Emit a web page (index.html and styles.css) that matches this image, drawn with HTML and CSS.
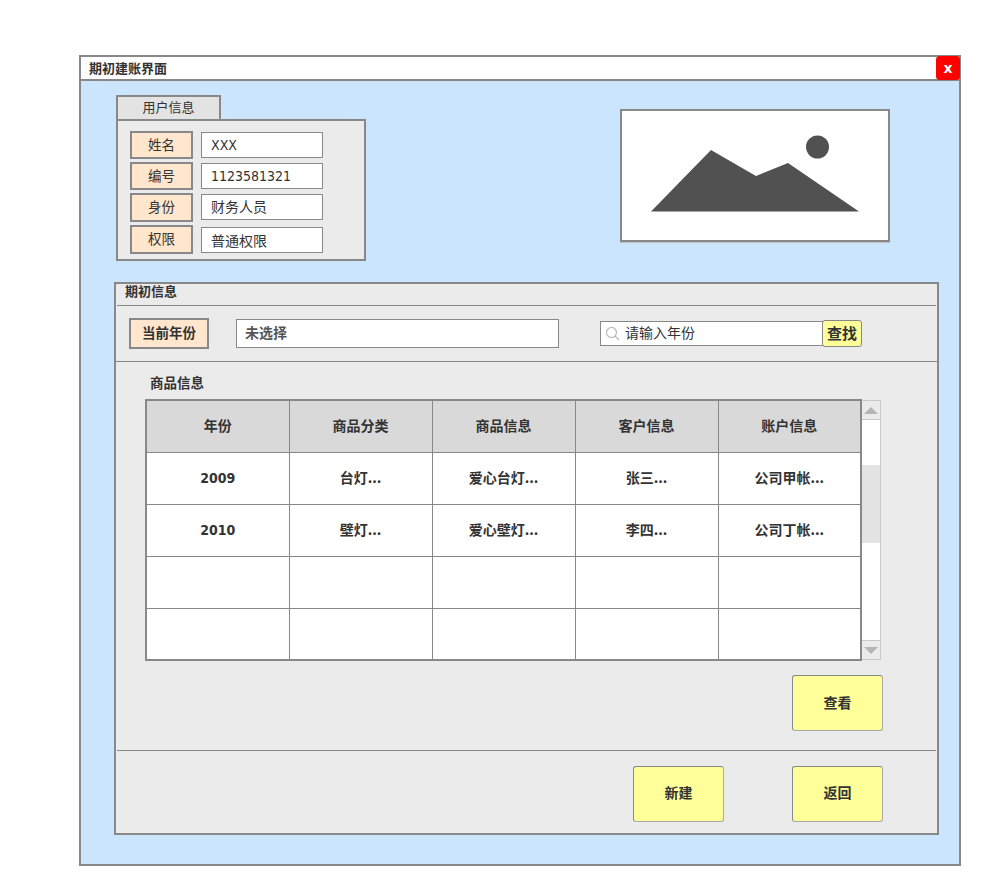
FILE: index.html
```html
<!DOCTYPE html>
<html lang="zh-CN">
<head>
    <meta charset="UTF-8">
    <title>期初建账界面</title>
    <link rel="stylesheet" href="styles.css">
</head>
<body>
    <div class="window">
        <div class="title-bar">期初建账界面</div>
        <div class="close-btn">x</div>

        <div class="window-body">
            <div class="top-row">
                <div class="user-box">
                    <div class="tab">用户信息</div>
                    <div class="user-group">
                        <div class="user-row">
                            <div class="tag">姓名</div>
                            <div class="field latin">XXX</div>
                        </div>
                        <div class="user-row">
                            <div class="tag">编号</div>
                            <div class="field latin">1123581321</div>
                        </div>
                        <div class="user-row tall">
                            <div class="tag">身份</div>
                            <div class="field">财务人员</div>
                        </div>
                        <div class="user-row tall">
                            <div class="tag">权限</div>
                            <div class="field low">普通权限</div>
                        </div>
                    </div>
                </div>
                <div class="picture">
                    <svg width="266" height="129" viewBox="0 0 266 129">
                        <path d="M29 100.500 L89 39 L134 65 L166 52 L237 100.500 Z" fill="#515151"/>
                        <circle cx="195.500" cy="36" r="11.500" fill="#515151"/>
                    </svg>
                </div>
            </div>

            <div class="panel">
                <div class="panel-title">期初信息</div>

                <div class="filter-row">
                    <div class="year-tag">当前年份</div>
                    <div class="year-select">未选择</div>
                    <div class="search">
                        <div class="search-input">
                            <svg width="14" height="14" viewBox="0 0 14 14">
                                <circle cx="5.500" cy="5.500" r="5" fill="none" stroke="#bbb" stroke-width="1.200"/>
                                <path d="M9 9 L13 13" stroke="#bbb" stroke-width="1.200"/>
                            </svg>
                            <span>请输入年份</span>
                        </div>
                        <div class="search-btn">查找</div>
                    </div>
                </div>

                <div class="goods">
                    <div class="goods-title">商品信息</div>
                    <div class="table-wrap">
                        <table class="goods-table">
                            <tr class="head">
                                <th>年份</th>
                                <th>商品分类</th>
                                <th>商品信息</th>
                                <th>客户信息</th>
                                <th>账户信息</th>
                            </tr>
                            <tr>
                                <td class="year">2009</td>
                                <td>台灯...</td>
                                <td>爱心台灯...</td>
                                <td>张三...</td>
                                <td>公司甲帐...</td>
                            </tr>
                            <tr>
                                <td class="year">2010</td>
                                <td>壁灯...</td>
                                <td>爱心壁灯...</td>
                                <td>李四...</td>
                                <td>公司丁帐...</td>
                            </tr>
                            <tr>
                                <td></td><td></td><td></td><td></td><td></td>
                            </tr>
                            <tr>
                                <td></td><td></td><td></td><td></td><td></td>
                            </tr>
                        </table>
                        <div class="scrollbar">
                            <div class="scroll-btn"><span class="arrow-up"></span></div>
                            <div class="scroll-track">
                                <div class="scroll-thumb"></div>
                            </div>
                            <div class="scroll-btn"><span class="arrow-down"></span></div>
                        </div>
                    </div>
                    <div class="view-row">
                        <div class="btn">查看</div>
                    </div>
                </div>

                <div class="bottom-row">
                    <div class="btn">新建</div>
                    <div class="btn">返回</div>
                </div>
            </div>
        </div>
    </div>
</body>
</html>
```

FILE: styles.css
```css
* {
    box-sizing: border-box;
}
body {
    margin: 0;
    padding: 55px 0 0 79px;
    background-color: #ffffff;
    font-family: "Noto Sans CJK SC", "DejaVu Sans", sans-serif;
    font-size: 14px;
    color: #333333;
}

/* Window frame */
.window {
    position: relative;
    width: 882px;
    height: 811px;
    border: 2px solid #888888;
    background-color: #cce5ff;
}
.title-bar {
    height: 24px;
    padding: 2px 0 0 8px;
    background-color: #ffffff;
    border-bottom: 2px solid #888888;
    font-size: 13px;
    font-weight: bold;
    line-height: 18px;
}
.close-btn {
    position: absolute;
    top: -1px;
    right: -1px;
    width: 24px;
    height: 24px;
    border-radius: 4px;
    background-color: #ff0000;
    color: #ffffff;
    font-family: "DejaVu Sans", sans-serif;
    font-size: 14px;
    font-weight: bold;
    line-height: 25px;
    text-align: center;
}
.window-body {
    padding: 14px 0 0 33px;
}

/* User info */
.top-row {
    display: flex;
    align-items: flex-start;
    padding-left: 2px;
    height: 187px;
}
.user-box {
    width: 250px;
}
.tab {
    width: 105px;
    height: 24px;
    border: 2px solid #888888;
    border-bottom: none;
    background-color: #e3e3e3;
    font-size: 13px;
    line-height: 20px;
    text-align: center;
}
.user-group {
    height: 142px;
    padding: 10px 0 0 12px;
    border: 2px solid #888888;
    background-color: #ebebeb;
}
.user-row {
    display: flex;
    align-items: flex-start;
    height: 28px;
    margin-bottom: 3px;
}
.user-row.tall {
    height: 29px;
}
.tag {
    width: 63px;
    height: 100%;
    border: 2px solid #888888;
    background-color: #ffe6cc;
    font-size: 13.500px;
    line-height: 22px;
    text-align: center;
}
.field {
    width: 122px;
    height: 26px;
    margin: 1px 0 0 8px;
    padding-left: 9px;
    border: 1px solid #888888;
    background-color: #ffffff;
    line-height: 22px;
}
.field.latin {
    font-family: "DejaVu Sans Condensed", "DejaVu Sans", sans-serif;
    line-height: 24px;
}
.field.low {
    margin-top: 2px;
    line-height: 24px;
}
.picture {
    width: 270px;
    height: 133px;
    margin: 14px 0 0 254px;
    border: 2px solid #888888;
    background-color: #ffffff;
    box-shadow: 0 1px 0 #c0c0c0;
}
.picture svg {
    display: block;
}

/* Opening balance panel */
.panel {
    width: 825px;
    height: 553px;
    border: 2px solid #888888;
    background-color: #ebebeb;
}
.panel-title {
    height: 22px;
    margin: 0 1px;
    padding-left: 8px;
    border-bottom: 1px solid #888888;
    font-size: 13px;
    font-weight: bold;
    line-height: 13px;
}
.filter-row {
    display: flex;
    align-items: center;
    height: 56px;
    padding-left: 13px;
    border-bottom: 1px solid #888888;
}
.year-tag {
    width: 80px;
    height: 31px;
    border: 2px solid #888888;
    background-color: #ffe6cc;
    font-size: 13.500px;
    font-weight: bold;
    line-height: 25px;
    text-align: center;
}
.year-select {
    width: 323px;
    height: 29px;
    margin-left: 27px;
    padding-left: 8px;
    border: 1px solid #888888;
    background-color: #ffffff;
    color: #555555;
    font-weight: bold;
    line-height: 24px;
}
.search {
    display: flex;
    align-items: center;
    margin-left: 41px;
}
.search-input {
    display: flex;
    align-items: center;
    width: 223px;
    height: 25px;
    padding-left: 5px;
    border: 1px solid #888888;
    background-color: #ffffff;
}
.search-input span {
    margin: 0 0 2px 5px;
    line-height: 21px;
}
.search-btn {
    width: 40px;
    height: 27px;
    margin-left: -1px;
    border: 1px solid #888888;
    border-radius: 3px;
    background-color: #ffff99;
    font-size: 15px;
    font-weight: bold;
    line-height: 23px;
    text-align: center;
}
.goods {
    height: 389px;
    padding-left: 28px;
    border-bottom: 1px solid #888888;
    margin-right: 1px;
    margin-left: 1px;
}
.goods-title {
    height: 37px;
    padding: 11px 0 0 5px;
    font-size: 13.500px;
    font-weight: bold;
    line-height: 18px;
}

/* Goods table */
.table-wrap {
    display: flex;
    align-items: flex-start;
}
.goods-table {
    width: 717px;
    height: 262px;
    border-collapse: collapse;
    table-layout: fixed;
    border: 2px solid #888888;
    background-color: #ffffff;
}
.goods-table th,
.goods-table td {
    height: 52px;
    padding: 0 0 2px;
    border: 1px solid #888888;
    font-size: 14px;
    font-weight: bold;
    text-align: center;
}
.goods-table .head th {
    background-color: #d9d9d9;
}
.goods-table td.year {
    padding: 0;
    font-family: "DejaVu Sans Condensed", "DejaVu Sans", sans-serif;
}
.scrollbar {
    display: flex;
    flex-direction: column;
    width: 19px;
    height: 260px;
    margin-top: 1px;
    border: 1px solid #c8c8c8;
    border-left: none;
    background-color: #ffffff;
}
.scroll-btn {
    display: flex;
    align-items: center;
    justify-content: center;
    height: 19px;
    background-color: #ebebeb;
}
.scroll-btn:first-child {
    border-bottom: 1px solid #c8c8c8;
}
.scroll-btn:last-child {
    border-top: 1px solid #c8c8c8;
}
.arrow-up {
    border-left: 7px solid transparent;
    border-right: 7px solid transparent;
    border-bottom: 7px solid #b5b5b5;
}
.arrow-down {
    border-left: 7px solid transparent;
    border-right: 7px solid transparent;
    border-top: 7px solid #b5b5b5;
}
.scroll-track {
    flex: 1;
    padding-top: 45px;
}
.scroll-thumb {
    height: 78px;
    background-color: #e3e3e3;
}

/* Buttons */
.btn {
    width: 91px;
    height: 56px;
    border: 1px solid;
    border-color: #888888 #aaaaaa #aaaaaa #888888;
    border-radius: 3px;
    background-color: #ffff99;
    font-weight: bold;
    line-height: 53px;
    text-align: center;
}
.view-row {
    display: flex;
    justify-content: flex-end;
    width: 738px;
    margin-top: 14px;
}
.bottom-row {
    display: flex;
    gap: 68px;
    justify-content: flex-end;
    width: 767px;
    padding-top: 15px;
}
.bottom-row .btn {
    line-height: 51px;
}
```
